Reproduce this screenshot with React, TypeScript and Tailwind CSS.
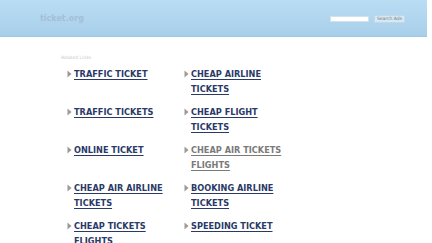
import React from "react";

const col1 = [
  ["TRAFFIC TICKET"],
  ["TRAFFIC TICKETS"],
  ["ONLINE TICKET"],
  ["CHEAP AIR AIRLINE", "TICKETS"],
  ["CHEAP TICKETS", "FLIGHTS"],
];
const col2 = [
  ["CHEAP AIRLINE", "TICKETS"],
  ["CHEAP FLIGHT", "TICKETS"],
  ["CHEAP AIR TICKETS", "FLIGHTS"],
  ["BOOKING AIRLINE", "TICKETS"],
  ["SPEEDING TICKET"],
];

function Arrow() {
  return (
    <svg width="5" height="8" viewBox="0 0 5 8" className="shrink-0 mt-[3px]">
      <path d="M0.5 0.5 L4.5 4 L0.5 7.5 Z" fill="#9a9a9a" />
    </svg>
  );
}

function Item({ lines, visited }: { lines: string[]; visited?: boolean }) {
  return (
    <div className="flex gap-[2px] h-[38px]">
      <Arrow />
      <a
        className={`underline decoration-1 underline-offset-2 font-bold text-[8.2px] leading-[15px] ${
          visited ? "text-[#7a7a7a]" : "text-[#2a3a68]"
        }`}
      >
        {lines.map((l, i) => (
          <div key={i}>{l}</div>
        ))}
      </a>
    </div>
  );
}

export default function App() {
  return (
    <div
      className="w-[432px] h-[243px] overflow-hidden bg-white"
      style={{ fontFamily: '"DejaVu Sans", Verdana, sans-serif' }}
    >
      <div className="w-[427px] h-[37px] bg-gradient-to-b from-[#b9ddf3] to-[#a8cfea] border-b border-[#a0c6e0] flex items-center pl-[40px] pr-[22px]">
        <div className="text-[8px] font-bold text-[#a3bfd6] mt-[1px]">ticket.org</div>
        <div className="ml-auto flex items-center gap-[5px] mt-[1px]">
          <div className="w-[39px] h-[6px] bg-white border border-[#cfe3ef]" />
          <div className="h-[8px] w-[31px] bg-[#d6e8f4] border border-[#c0d8ea] text-[4.5px] leading-[5px] text-[#777] flex items-center justify-center">
            Search Ads
          </div>
        </div>
      </div>
      <div className="pl-[61px] pt-[18px]">
        <div className="text-[4.5px] text-[#c8c8c8] leading-[6px]">Related Links</div>
        <div className="flex pl-[6px] pt-[6px]">
          <div className="w-[117px] flex flex-col">
            {col1.map((l, i) => (
              <Item key={i} lines={l} />
            ))}
          </div>
          <div className="flex flex-col">
            {col2.map((l, i) => (
              <Item key={i} lines={l} visited={i === 2} />
            ))}
          </div>
        </div>
      </div>
    </div>
  );
}
